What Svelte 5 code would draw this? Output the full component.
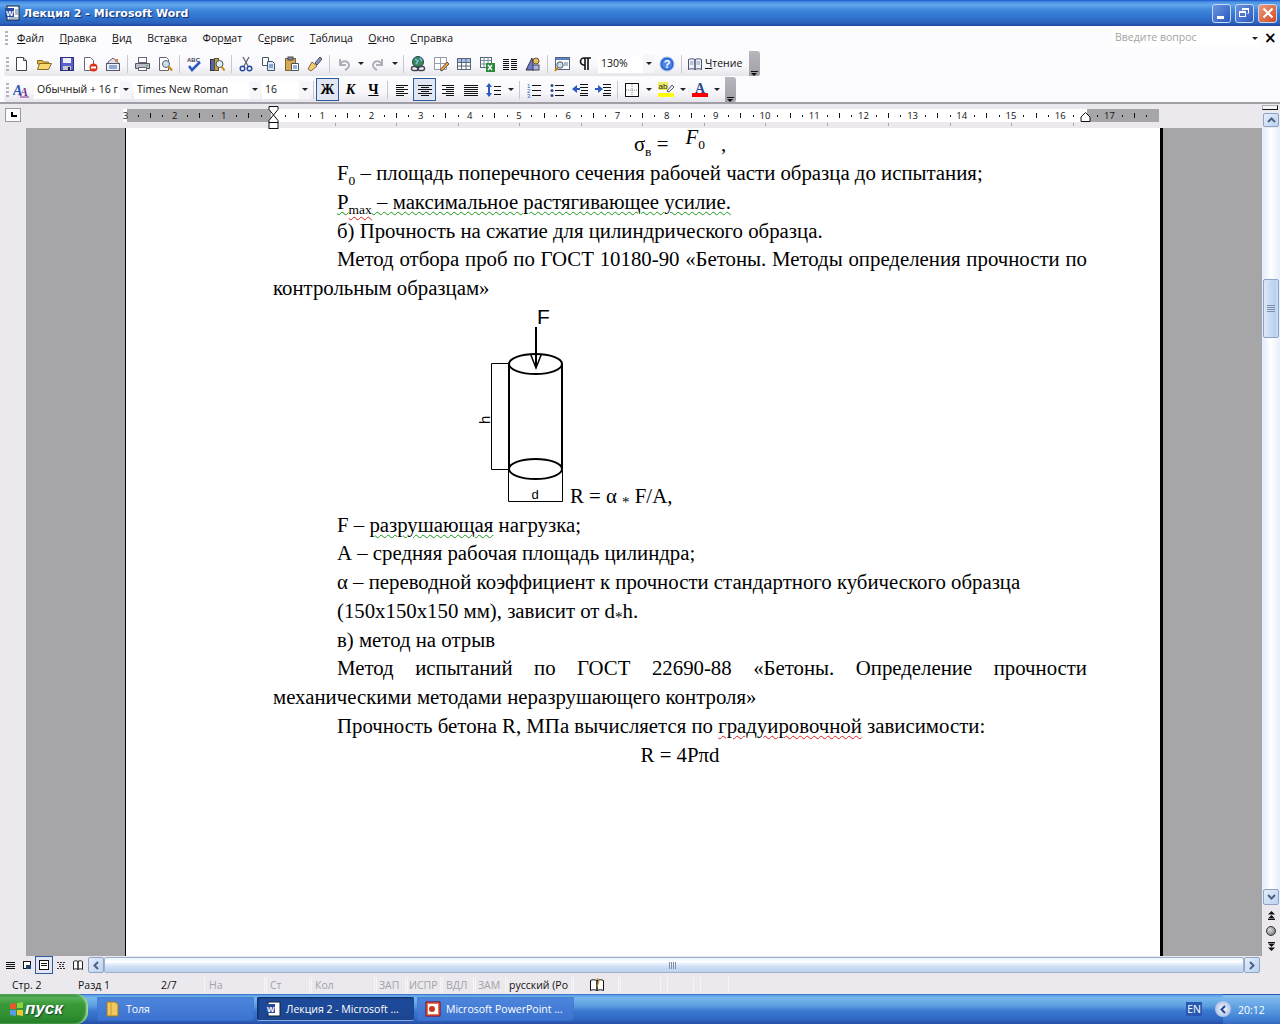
<script>
	const menu = [
		['', 'Ф', 'айл'], ['', 'П', 'равка'], ['', 'В', 'ид'], ['Вст', 'а', 'вка'], ['Фор', 'м', 'ат'],
		['С', 'е', 'рвис'], ['', 'Т', 'аблица'], ['', 'О', 'кно'], ['', 'С', 'правка']
	];

	const lines = (ys) => ys.map(([a, b, y]) => `<path d="M${a} ${y}.5H${b}" stroke="#111"/>`).join('');

	const icons = {
		new: '<path d="M3.5 1.5h7l3 3v10h-10z" fill="#fff" stroke="#444"/><path d="M10.5 1.5v3h3" fill="#dde" stroke="#444"/>',
		open: '<path d="M1.5 4.5h5l1 1.5h5v2h-11z" fill="#e8b84a" stroke="#8a6a1c"/><path d="M1.5 13.5l2-6h12l-3 6z" fill="#f6d873" stroke="#8a6a1c"/>',
		save: '<rect x="1.5" y="1.5" width="13" height="13" fill="#5a62c8" stroke="#2c2f80"/><rect x="4" y="2" width="8" height="5" fill="#eef"/><rect x="4" y="10" width="8" height="4" fill="#c8c8d8"/><rect x="9" y="11" width="2" height="3" fill="#223"/>',
		perm: '<path d="M2.5 1.5h6l3 3v10h-9z" fill="#fff" stroke="#667"/><circle cx="11.5" cy="11.5" r="4" fill="#d8341c"/><rect x="9" y="10.5" width="5" height="2" fill="#fff"/>',
		mail: '<path d="M3 6l5-4 5 4v2H3z" fill="#dde" stroke="#667"/><rect x="1.5" y="7.5" width="13" height="7" fill="#eef" stroke="#556"/><path d="M4 10h8M4 12h8" stroke="#36a"/><rect x="10" y="3" width="3" height="3" fill="#c84"/>',
		print: '<rect x="4.5" y="1.5" width="8" height="5" fill="#fff" stroke="#667"/><path d="M1.5 7.5h14v5h-14z" fill="#b8bcc8" stroke="#556"/><rect x="4.5" y="11.5" width="8" height="3" fill="#fff" stroke="#667"/><rect x="12" y="9" width="2" height="1" fill="#3c3"/>',
		preview: '<path d="M2.5 1.5h7l2 2v11h-9z" fill="#fff" stroke="#667"/><circle cx="9" cy="8" r="3.5" fill="#cde" stroke="#567"/><path d="M11.5 10.5l3.5 4" stroke="#c80" stroke-width="2"/>',
		spell: '<text x="1" y="6" font-size="6" font-family="Liberation Sans" font-weight="bold" fill="#445">ABC</text><path d="M3 10l3 4 8-8" fill="none" stroke="#2a5ac0" stroke-width="2.5"/>',
		research: '<rect x="1.5" y="3.5" width="4" height="11" fill="#5a62a8" stroke="#334"/><rect x="5.5" y="2.5" width="4" height="12" fill="#c8a040" stroke="#553"/><circle cx="10.5" cy="8" r="3.5" fill="#dee" stroke="#456"/><path d="M12.5 10.5l3 4" stroke="#c80" stroke-width="2"/>',
		cut: '<path d="M5 1l5 9M11 1L6 10" stroke="#667" stroke-width="1.3"/><circle cx="4.5" cy="12.5" r="2.3" fill="none" stroke="#2a4aa0" stroke-width="1.4"/><circle cx="11.5" cy="12.5" r="2.3" fill="none" stroke="#2a4aa0" stroke-width="1.4"/>',
		copy: '<path d="M1.5 1.5h6v8h-6z" fill="#fff" stroke="#456"/><path d="M6.5 5.5h5l2 2v7h-7z" fill="#dbe8fa" stroke="#456"/><path d="M8 9h4M8 11h4" stroke="#36a"/>',
		paste: '<rect x="1.5" y="2.5" width="10" height="12" fill="#d8a850" stroke="#764"/><rect x="4" y="1" width="5" height="3" fill="#889" stroke="#445"/><path d="M7.5 7.5h7v7h-7z" fill="#fff" stroke="#456"/><path d="M9 10h4M9 12h4" stroke="#36a"/>',
		brush: '<path d="M1 13l4-7 5 4-6 5z" fill="#f0d070" stroke="#864"/><path d="M8 7l5-6 2 2-5 6z" fill="#889ac0" stroke="#445"/>',
		undo: '<path d="M4 3v6h6M4 9c2-5 8-5 9 0 0 2-2 4-4 5" fill="none" stroke="#aeb0b8" stroke-width="2"/>',
		redo: '<path d="M12 3v6H6M12 9C10 4 4 4 3 9c0 2 2 4 4 5" fill="none" stroke="#aeb0b8" stroke-width="2"/>',
		link: '<circle cx="8" cy="6" r="5.5" fill="#3c8a50" stroke="#246"/><path d="M5 3l3 2-2 3M10 2l2 3" stroke="#7ac0e8" fill="none" stroke-width="1.5"/><rect x="1.5" y="10.5" width="7" height="4" rx="2" fill="none" stroke="#445" stroke-width="1.4"/><rect x="7.5" y="10.5" width="7" height="4" rx="2" fill="none" stroke="#445" stroke-width="1.4"/>',
		borders: '<path d="M1.5 1.5h12v12h-12zM7.5 1.5v12M1.5 7.5h12" fill="#fff" stroke="#99a"/><path d="M7 14l7-8 2 2-7 7z" fill="#e8a040" stroke="#654"/>',
		table: '<rect x="1.5" y="2.5" width="13" height="11" fill="#fff" stroke="#567"/><rect x="2" y="3" width="12" height="3" fill="#a8c0e8"/><path d="M1.5 6.5h13M1.5 10h13M5.5 2.5v11M10 2.5v11" stroke="#567"/>',
		excel: '<rect x="1.5" y="1.5" width="11" height="10" fill="#fff" stroke="#567"/><path d="M1.5 4.5h11M1.5 8h11M5 1.5v10M9 1.5v10" stroke="#789"/><rect x="7" y="7" width="9" height="9" fill="#2a8a3a"/><path d="M9 9l4 5M13 9l-4 5" stroke="#fff" stroke-width="1.3"/>',
		columns: lines([[1, 7, 3], [9, 15, 3], [1, 7, 5], [9, 15, 5], [1, 7, 7], [9, 15, 7], [1, 7, 9], [9, 15, 9], [1, 7, 11], [9, 15, 11], [1, 7, 13], [9, 15, 13]]),
		draw: '<path d="M1 14L7 2l2 12z" fill="#7078c8" stroke="#334"/><circle cx="11" cy="5" r="3" fill="#e8c050" stroke="#654"/><rect x="8" y="9" width="6" height="5" fill="#a8b8e0" stroke="#445"/>',
		docmap: '<rect x="1.5" y="1.5" width="14" height="12" fill="#fff" stroke="#567"/><rect x="2" y="2" width="13" height="2" fill="#5a80c8"/><circle cx="6" cy="9" r="3.2" fill="#cde" stroke="#456"/><path d="M3.5 11.5L1 15" stroke="#c80" stroke-width="2"/><path d="M10 7h4M10 9h4" stroke="#678"/>',
		pilcrow: '<path d="M7 2h7M7 2a3.5 3.5 0 000 7h1V2M8 2v12M11 2v12" fill="none" stroke="#111" stroke-width="1.6"/>',
		help: '<circle cx="8" cy="8" r="7" fill="#2a62d0" stroke="#a8c0e8"/><circle cx="8" cy="8" r="5" fill="#4c86e8"/><text x="8" y="12" font-size="11" font-family="Liberation Sans" font-weight="bold" fill="#fff" text-anchor="middle">?</text>',
		book: '<path d="M1.5 3.5c2-1 4-1 6.5 0v10c-2.500-1-4.500-1-6.500 0zM14.500 3.500c-2-1-4-1-6.500 0v10c2.500-1 4.500-1 6.500 0z" fill="#eef" stroke="#456"/><path d="M3 6h3.500M3 8h3.500M9.500 6H13M9.500 8H13" stroke="#89a"/>',
		styles: '<text x="0" y="13" font-size="14" font-style="italic" font-family="Liberation Serif" font-weight="bold" fill="#2a5ab0">A</text><text x="7" y="14" font-size="12" font-style="italic" font-family="Liberation Serif" font-weight="bold" fill="#803090">A</text><path d="M7 15h9" stroke="#803090"/>',
		left: lines([[2, 14, 3], [2, 10, 5], [2, 14, 7], [2, 10, 9], [2, 14, 11], [2, 10, 13]]),
		center: lines([[1, 15, 3], [4, 12, 5], [1, 15, 7], [4, 12, 9], [1, 15, 11], [4, 12, 13]]),
		right: lines([[2, 14, 3], [6, 14, 5], [2, 14, 7], [6, 14, 9], [2, 14, 11], [6, 14, 13]]),
		justify: lines([[1, 15, 3], [1, 15, 5], [1, 15, 7], [1, 15, 9], [1, 15, 11], [1, 15, 13]]),
		spacing: '<path d="M3 1l3 4H4v6h2l-3 4-3-4h2V5H0z" fill="#2a5ac0"/>' + lines([[8, 15, 4], [8, 15, 8], [8, 15, 12]]),
		numbered: '<text x="1" y="6" font-size="6" font-family="Liberation Sans" fill="#2a5ac0">1</text><text x="1" y="11" font-size="6" font-family="Liberation Sans" fill="#2a5ac0">2</text><text x="1" y="16" font-size="6" font-family="Liberation Sans" fill="#2a5ac0">3</text>' + lines([[6, 15, 3], [6, 15, 8], [6, 15, 13]]),
		bullets: '<circle cx="3" cy="3.500" r="1.500" fill="#2a4a90"/><circle cx="3" cy="8.500" r="1.500" fill="#2a4a90"/><circle cx="3" cy="13.500" r="1.500" fill="#2a4a90"/>' + lines([[6, 15, 3], [6, 15, 8], [6, 15, 13]]),
		outdent: '<path d="M0 7l5-4v3h3v2H5v3z" fill="#2a5ac0"/>' + lines([[8, 16, 2], [8, 16, 5], [9, 16, 8], [8, 16, 11], [8, 16, 13]]),
		indent: '<path d="M8 7L3 3v3H0v2h3v3z" fill="#2a5ac0"/>' + lines([[8, 16, 2], [8, 16, 5], [9, 16, 8], [8, 16, 11], [8, 16, 13]]),
		frame: '<rect x="1.500" y="1.500" width="13" height="13" fill="#fff" stroke="#111"/><path d="M8 2v12M2 8h12" stroke="#888" stroke-dasharray="1 1"/>',
		marker: '<rect x="0" y="0" width="10" height="8" fill="#ecec60"/><text x="0.500" y="7" font-size="8" font-family="Liberation Sans" fill="#223">ab</text><path d="M9 9l5-6 2 2-5 5z" fill="#eef" stroke="#556"/><rect x="0" y="11" width="16" height="4" fill="#ff0"/>',
		color: '<text x="8" y="10.500" font-size="14" font-family="Liberation Serif" font-weight="bold" fill="#2a4a90" text-anchor="middle">A</text><rect x="0" y="11" width="16" height="4" fill="#f00"/>'
	};

	const bar1 = [
		'new', 'open', 'save', 'perm', 'mail', '|', 'print', 'preview', '|', 'spell', 'research', '|',
		'cut', 'copy', 'paste', 'brush', '|', 'undo', '>', 'redo', '>', '|',
		'link', 'borders', 'table', 'excel', 'columns', 'draw', '|', 'docmap', 'pilcrow'
	];
	const bar2a = ['left', 'center', 'right', 'justify', 'spacing', '>', '|', 'numbered', 'bullets', 'outdent', 'indent', '|', 'frame', '>', 'marker', '>', 'color', '>'];

	// ruler: 49.2px per cm, zero at the left margin
	const cm = 49.2;
	const zero = 273;
	const rulerMarks = [];
	for (let i = -3; i <= 17; i++) {
		const x = zero + i * cm;
		if (i !== 0) rulerMarks.push({ x, label: String(Math.abs(i)) });
		rulerMarks.push({ x: x + cm * 0.25, dot: true });
		rulerMarks.push({ x: x + cm * 0.5, bar: true });
		rulerMarks.push({ x: x + cm * 0.75, dot: true });
	}
	const marks = rulerMarks.filter((m) => m.x < 1155 && Math.abs(m.x - zero) > 1 && Math.abs(m.x - 1087) > 4);
	const tabs = Array.from({ length: 13 }, (_, i) => zero + 61.5 * (i + 1));

	const cells = [
		['Стр. 2', 66, 11, false], ['Разд 1', 83, 11, false], ['2/7', 55, 11, false],
		['На', 61, 4, true], ['Ст', 44, 3, true], ['Кол', 64, 3, true], ['ЗАП', 30, 2, true],
		['ИСПР', 34, 1, true], ['ВДЛ', 32, 3, true], ['ЗАМ', 31, 2, true], ['русский (Ро', 65, 1, false]
	];
</script>

{#snippet icon(name)}
	<svg class="ico" viewBox="0 0 16 16" width="16" height="16">{@html icons[name]}</svg>
{/snippet}

{#snippet tools(list)}
	{#each list as t}
		{#if t === '|'}
			<span class="sep"></span>
		{:else if t === '>'}
			<span class="drop"></span>
		{:else}
			<span class="btn">{@render icon(t)}</span>
		{/if}
	{/each}
{/snippet}

<div class="window">
	<header class="title">
		<svg class="appicon" viewBox="0 0 16 16" width="16" height="16">
			<rect x="2" y="1" width="12" height="14" fill="#fff" stroke="#123"/>
			<rect x="0" y="3" width="9" height="9" fill="#2a4aa0"/>
			<text x="1" y="10.500" font-size="8" font-family="Liberation Sans" font-weight="bold" fill="#fff">W</text>
			<path d="M10 5h3M10 7h3M10 9h3M4 13h9" stroke="#57a"/>
		</svg>
		<span class="title-text">Лекция 2 - Microsoft Word</span>
		<div class="winbtns">
			<span class="winbtn"><i class="min"></i></span>
			<span class="winbtn"><i class="max"></i><i class="max back"></i></span>
			<span class="winbtn close">
				<svg viewBox="0 0 12 12" width="12" height="12"><path d="M1.500 1.500l9 9M10.500 1.500l-9 9" stroke="#fff" stroke-width="2.200"/></svg>
			</span>
		</div>
	</header>

	<nav class="menubar">
		<span class="hgrip"></span>
		{#each menu as [a, u, b]}
			<span class="menuitem">{a}<u>{u}</u>{b}</span>
		{/each}
		<div class="ask">
			<span class="ask-box">Введите вопрос</span>
			<span class="arrow"></span>
			<span class="ask-x">×</span>
		</div>
	</nav>

	<div class="rebar">
		<div class="toolbar one">
			<span class="hgrip"></span>
			{@render tools(bar1)}
			<span class="combo zoom"><span class="val">130%</span><span class="arrow"></span></span>
			<span class="btn">{@render icon('help')}</span>
			<span class="sep"></span>
			<span class="read">{@render icon('book')}<span class="read-text"><u>Ч</u>тение</span></span>
			<span class="endgrip"></span>
		</div>
	</div>
	<div class="rebar">
		<div class="toolbar two">
			<span class="hgrip"></span>
			<span class="btn">{@render icon('styles')}</span>
			<span class="combo style"><span class="val">Обычный + 16 г</span><span class="arrow"></span></span>
			<span class="combo font"><span class="val">Times New Roman</span><span class="arrow"></span></span>
			<span class="combo size"><span class="val">16</span><span class="arrow"></span></span>
			<span class="sep"></span>
			<span class="btn on bold">Ж</span>
			<span class="btn ital">К</span>
			<span class="btn under">Ч</span>
			<span class="sep narrow"></span>
			{#each bar2a as t}
				{#if t === '|'}
					<span class="sep"></span>
				{:else if t === '>'}
					<span class="drop"></span>
				{:else}
					<span class="btn" class:on={t === 'center'}>{@render icon(t)}</span>
				{/if}
			{/each}
			<span class="endgrip"></span>
		</div>
	</div>

	<div class="rulerrow">
		<span class="tabsel"></span>
		<div class="ruler">
			<span class="shade sl"></span>
			<span class="shade sr"></span>
			{#each marks as m}
				{#if m.label}
					<span class="num" style="left:{m.x}px">{m.label}</span>
				{:else if m.dot}
					<span class="dot" style="left:{Math.round(m.x)}px"></span>
				{:else}
					<span class="tick" style="left:{Math.round(m.x)}px"></span>
				{/if}
			{/each}
			{#each tabs as t}
				<span class="tabstop" style="left:{Math.round(t)}px"></span>
			{/each}
			<svg class="indent il" viewBox="0 0 11 23" width="11" height="23">
				<path d="M1 .5h9v3L5.500 9 1 3.500zM5.500 9L10 14.500v2H1v-2z" fill="#fff" stroke="#111"/>
				<rect x="1" y="16.500" width="9" height="6" fill="#fff" stroke="#111"/>
			</svg>
			<svg class="indent ir" viewBox="0 0 11 10" width="11" height="10">
				<path d="M5.500 .5L10 5v4.500H1V5z" fill="#fff" stroke="#111"/>
			</svg>
		</div>
		<span class="splitter"></span>
	</div>

	<div class="workarea">
		<div class="vruler"></div>
		<main class="canvas">
			<article class="page">
				<p class="formula">σ<sub>в</sub> =<span class="frac"><i>F</i><sub>0</sub></span><span class="comma">,</span></p>
				<p class="ind">F<sub>0</sub> – площадь поперечного сечения рабочей части образца до испытания;</p>
				<p class="ind"><span class="sq">P<sub class="sqred">max</sub> – максимальное растягивающее усилие.</span></p>
				<p class="ind">б) Прочность на сжатие для цилиндрического образца.</p>
				<p class="ind just">Метод отбора проб по ГОСТ 10180-90 «Бетоны. Методы определения прочности по контрольным образцам»</p>
				<p class="fig">
					<svg class="diagram" viewBox="0 1 85 200" width="85" height="200">
						<g fill="none" stroke="#000">
							<ellipse cx="50.500" cy="62" rx="26.500" ry="10" stroke-width="2"/>
							<ellipse cx="50.500" cy="167" rx="26.500" ry="10" stroke-width="2"/>
							<path d="M24 62v105M77 62v105" stroke-width="2"/>
							<path d="M23 61.500H6.500v106H23M23.500 168v31.500h54V168"/>
							<path d="M51 25v40" stroke-width="2"/>
							<path d="M45.500 52l5.500 14 5.500-14" stroke-width="1.500"/>
						</g>
						<text x="52" y="22" class="fF">F</text>
						<text x="50" y="197" class="fd" text-anchor="middle">d</text>
						<text class="fd fh" transform="translate(5 122) rotate(-90)">h</text>
					</svg>R = α <span class="star">*</span> F/A,</p>
				<p class="ind">F – <span class="sq">разрушающая</span> нагрузка;</p>
				<p class="ind">А – средняя рабочая площадь цилиндра;</p>
				<p class="ind">α – переводной коэффициент к прочности стандартного кубического образца</p>
				<p class="ind">(150х150х150 мм), зависит от d<span class="star">*</span>h.</p>
				<p class="ind">в) метод на отрыв</p>
				<p class="ind just">Метод испытаний по ГОСТ 22690-88 «Бетоны. Определение прочности механическими методами неразрушающего контроля»</p>
				<p class="ind">Прочность бетона R, МПа вычисляется по <span class="sqr">градуировочной</span> зависимости:</p>
				<p class="center">R = 4Pπd</p>
			</article>
		</main>
		<aside class="vscroll">
			<span class="sbtn up"><svg viewBox="0 0 9 6" width="9" height="6"><path d="M1 5l3.500-3.500L8 5" fill="none" stroke="#4d6185" stroke-width="2"/></svg></span>
			<div class="vtrack">
				<span class="vthumb"><i></i></span>
			</div>
			<span class="sbtn down"><svg viewBox="0 0 9 6" width="9" height="6"><path d="M1 1l3.500 3.500L8 1" fill="none" stroke="#4d6185" stroke-width="2"/></svg></span>
			<div class="browse">
				<svg viewBox="0 0 9 9" width="9" height="9"><path d="M4.500 0L8 3.500H1zM4.500 4L8 7.500H1z M1 8h7v1H1z" fill="#111"/></svg>
				<span class="ball"></span>
				<svg viewBox="0 0 9 9" width="9" height="9"><path d="M1 0h7v1H1zM4.500 5L1 1.500h7zM4.500 9L1 5.500h7z" fill="#111"/></svg>
			</div>
		</aside>
	</div>

	<div class="hscrollrow">
		<div class="views">
			<svg viewBox="0 0 16 16" width="16" height="16"><path d="M4 5.500h9M4 7.500h9M4 9.500h9M4 11.500h9" stroke="#111"/></svg>
			<svg viewBox="0 0 16 16" width="16" height="16"><rect x="4.500" y="4.500" width="7" height="7" fill="#fff" stroke="#111"/><rect x="7" y="8" width="5" height="4" fill="#246"/></svg>
			<span class="view-on"><svg viewBox="0 0 16 16" width="16" height="16"><rect x="3.500" y="3.500" width="9" height="9" fill="#fff" stroke="#111"/><path d="M5 6.500h6M5 8.500h6" stroke="#111"/></svg></span>
			<svg viewBox="0 0 16 16" width="16" height="16"><path d="M4 5.500h8M6 7.500h6M6 9.500h6M4 11.500h8" stroke="#333" stroke-dasharray="2 1"/></svg>
			<svg viewBox="0 0 16 16" width="16" height="16"><path d="M3.500 4.500c1.500-1 3-1 4.500 0v8c-1.500-1-3-1-4.500 0zM12.500 4.500c-1.500-1-3-1-4.500 0v8c1.500-1 3-1 4.500 0z" fill="#fff" stroke="#222"/></svg>
		</div>
		<span class="sbtn"><svg viewBox="0 0 6 9" width="6" height="9"><path d="M5 1L1.500 4.500 5 8" fill="none" stroke="#4d6185" stroke-width="2"/></svg></span>
		<div class="htrack"><i></i></div>
		<span class="sbtn"><svg viewBox="0 0 6 9" width="6" height="9"><path d="M1 1l3.500 3.500L1 8" fill="none" stroke="#4d6185" stroke-width="2"/></svg></span>
	</div>

	<footer class="status">
		{#each cells as [text, w, pad, dim], i}
			<span class="cell" class:dim class:first={i < 3} style="width:{w}px;padding-left:{pad}px">{text}</span>
		{/each}
		<span class="cell bookcell" style="width:46px">
			<svg viewBox="0 0 16 16" width="16" height="16"><path d="M1.500 3.500c2-1 4-1 6.500 0v10c-2.500-1-4.500-1-6.500 0zM14.500 3.500c-2-1-4-1-6.500 0v10c2.500-1 4.500-1 6.500 0z" fill="#fff" stroke="#111"/><path d="M8 1l2 3-2 6" stroke="#c80" fill="none"/></svg>
		</span>
		<span class="cell" style="width:41px"></span>
		<span class="cell gapl" style="width:27px"></span>
		<span class="cell gapl" style="width:29px"></span>
	</footer>

	<div class="taskbar">
		<button class="start">
			<svg viewBox="0 0 16 16" width="16" height="16"><path d="M1 3l6-1v6H1z" fill="#e8582a"/><path d="M8 2l6-1v6H8z" fill="#8ad040"/><path d="M1 9h6v6l-6-1z" fill="#5a9ae8"/><path d="M8 9h6v6l-6-1z" fill="#f0c830"/></svg>
			<span>пуск</span>
		</button>
		<div class="tasks">
			<span class="task">
				<svg viewBox="0 0 16 16" width="16" height="16"><path d="M2 1h8l3 2v12H2z" fill="#f0c860" stroke="#a07820"/><path d="M6 1v14" stroke="#c89830"/></svg>
				Толя
			</span>
			<span class="task active">
				<svg viewBox="0 0 16 16" width="16" height="16"><rect x="3" y="1" width="12" height="14" fill="#fff" stroke="#123"/><rect x="1" y="3" width="9" height="9" fill="#2a4aa0"/><text x="2" y="10.500" font-size="8" font-family="Liberation Sans" font-weight="bold" fill="#fff">W</text></svg>
				Лекция 2 - Microsoft ...
			</span>
			<span class="task">
				<svg viewBox="0 0 16 16" width="16" height="16"><rect x="1" y="1" width="14" height="14" fill="#e87848" stroke="#802"/><rect x="3" y="3" width="10" height="10" fill="#fff"/><circle cx="7" cy="8" r="3" fill="#c83818"/></svg>
				Microsoft PowerPoint ...
			</span>
		</div>
		<span class="lang">EN</span>
		<div class="tray">
			<span class="trayarrow"><svg viewBox="0 0 6 9" width="6" height="9"><path d="M5 1L1.500 4.500 5 8" fill="none" stroke="#234a90" stroke-width="2"/></svg></span>
			<span class="clock">20:12</span>
		</div>
	</div>
</div>

<style>
	:global(body) {
		margin: 0;
		background: #ebe9ed;
		overflow: hidden;
	}

	.window {
		width: 1280px;
		height: 1024px;
		display: flex;
		flex-direction: column;
		overflow: hidden;
		font-family: "Open Sans", "Noto Sans", sans-serif;
		font-size: 10.5px;
		color: #111;
		background: #fcfbfe;
	}

	/* title bar */
	.title {
		height: 26px;
		flex: none;
		display: flex;
		align-items: center;
		padding-left: 5px;
		box-sizing: border-box;
		background: linear-gradient(#1a56c8 0, #4a92e4 2px, #62a6ec 5px, #3f86dc 10px, #2f74d0 17px, #2c62bc 23px, #1e48a0 26px);
	}

	.appicon {
		margin-right: 2px;
	}

	.title-text {
		font-family: "DejaVu Sans", sans-serif;
		font-weight: bold;
		font-size: 11px;
		color: #fff;
		text-shadow: 1px 1px 1px #0f2a70;
	}

	.winbtns {
		margin-left: auto;
		display: flex;
		gap: 4px;
		padding-right: 3px;
	}

	.winbtn {
		width: 19px;
		height: 19px;
		box-sizing: border-box;
		border: 1px solid #c8d8f0;
		border-radius: 3px;
		background: linear-gradient(135deg, #6a94e0, #2c58c0);
		position: relative;
		display: flex;
		align-items: center;
		justify-content: center;
	}

	.winbtn.close {
		background: linear-gradient(135deg, #ec9a80, #d04a20);
	}

	.min {
		position: absolute;
		left: 4px;
		bottom: 3px;
		width: 7px;
		height: 3px;
		background: #fff;
	}

	.max {
		position: absolute;
		left: 3px;
		top: 6px;
		width: 7px;
		height: 6px;
		box-sizing: border-box;
		border: 1px solid #fff;
		border-top-width: 2px;
	}

	.max.back {
		left: 6px;
		top: 3px;
		clip-path: polygon(0 0, 100% 0, 100% 100%, 70% 100%, 70% 50%, 0 50%);
	}

	/* menu */
	.menubar {
		height: 24px;
		flex: none;
		display: flex;
		align-items: center;
		padding-left: 5px;
		box-sizing: border-box;
	}

	.hgrip {
		width: 3px;
		height: 14px;
		flex: none;
		background: repeating-linear-gradient(#b4b3bb 0 2px, transparent 2px 4px);
	}

	.menubar .hgrip {
		margin-right: 9px;
	}

	.menuitem {
		margin-right: 15.500px;
		white-space: nowrap;
	}

	.ask {
		position: absolute;
		left: 1113px;
		top: 29px;
		display: flex;
		align-items: center;
	}

	.ask-box {
		width: 136px;
		height: 18px;
		line-height: 17px;
		padding-left: 2px;
		background: #fff;
		color: #a3a3a3;
		box-sizing: border-box;
	}

	.ask-box + .arrow {
		width: 11px;
		height: 18px;
		background-color: #fff;
	}

	.ask-x {
		margin-left: 4px;
		font: bold 15px "DejaVu Sans", sans-serif;
		color: #000;
	}

	/* toolbars */
	.rebar {
		height: 26px;
		flex: none;
		padding: 1px 0 0 4px;
		box-sizing: border-box;
	}

	.toolbar {
		height: 25px;
		display: inline-flex;
		align-items: center;
		padding-left: 2px;
		box-sizing: border-box;
		border-radius: 3px 0 0 3px;
		background: linear-gradient(#fdfdff, #f8f7fb 60%, #e6e5eb);
	}

	.btn {
		width: 23px;
		height: 23px;
		flex: none;
		box-sizing: border-box;
		display: flex;
		align-items: center;
		justify-content: center;
	}

	.btn.on {
		background: #e1e6f2;
		border: 1px solid #2f5a9c;
	}

	.bold,
	.ital,
	.under {
		font-family: "Liberation Serif", serif;
		font-weight: bold;
		font-size: 14px;
		color: #000;
	}

	.ital {
		font-style: italic;
	}

	.under {
		text-decoration: underline;
	}

	.sep {
		width: 1px;
		height: 18px;
		margin: 0 2.500px;
		flex: none;
		background: #c8c7cf;
	}

	.sep.narrow {
		margin: 0 2px;
	}

	.drop,
	.arrow {
		flex: none;
		position: relative;
	}

	.drop {
		width: 11px;
		height: 23px;
	}

	.drop::after,
	.arrow::after {
		content: "";
		position: absolute;
		left: 50%;
		top: 50%;
		margin: -1.500px 0 0 -3px;
		border: 3px solid transparent;
		border-top: 3px solid #222;
		border-bottom: 0;
	}

	.combo {
		display: flex;
		height: 18px;
		flex: none;
		background: #fff;
		align-items: center;
		box-sizing: border-box;
		padding-left: 3px;
	}

	.combo .val {
		flex: 1;
		white-space: nowrap;
		overflow: hidden;
		padding-bottom: 2px;
	}

	.combo .arrow {
		width: 11px;
		height: 18px;
		background-color: #f6f5f9;
	}

	.zoom {
		width: 56px;
		margin: 0 1px 0 2px;
	}

	.style {
		width: 97px;
		margin-left: 2px;
	}

	.font {
		width: 126px;
		margin-left: 3px;
	}

	.size {
		width: 48px;
		margin-left: 2px;
	}

	.read {
		display: flex;
		align-items: center;
		gap: 2px;
		padding-left: 3px;
		width: 64px;
		flex: none;
		box-sizing: border-box;
	}

	.read-text {
		padding-bottom: 1px;
	}

	.endgrip {
		width: 11px;
		height: 25px;
		flex: none;
		margin-left: 1px;
		border-radius: 0 3px 3px 0;
		background: linear-gradient(#b7b6bc, #a09fa5);
		position: relative;
	}

	.toolbar.two .endgrip {
		margin-left: 3px;
	}

	.endgrip::after {
		content: "";
		position: absolute;
		left: 2px;
		bottom: 4px;
		width: 7px;
		height: 1px;
		background: #111;
	}

	.endgrip::before {
		content: "";
		position: absolute;
		left: 2px;
		bottom: 0;
		border: 3.500px solid transparent;
		border-top-color: #111;
		border-bottom: 0;
	}

	/* ruler */
	.rulerrow {
		height: 26px;
		flex: none;
		position: relative;
		border-top: 2px solid #a09fa5;
		box-sizing: border-box;
		background: #ebe9ed;
	}

	.tabsel {
		position: absolute;
		left: 5px;
		top: 4px;
		width: 16px;
		height: 14px;
		box-sizing: border-box;
		border: 1px solid #9a99a0;
		background: #fcfbfe;
	}

	.tabsel::after {
		content: "";
		position: absolute;
		left: 5px;
		top: 3px;
		width: 6px;
		height: 5px;
		box-sizing: border-box;
		border-left: 2px solid #000;
		border-bottom: 2px solid #000;
	}

	.ruler {
		position: absolute;
		left: 0;
		top: 5px;
		width: 1280px;
		height: 13px;
	}

	.ruler::before {
		content: "";
		position: absolute;
		left: 123px;
		width: 1036px;
		top: 0;
		height: 13px;
		background: #fff;
	}

	.shade {
		position: absolute;
		top: 0;
		height: 13px;
		background: #a6a5a8;
	}

	.sl {
		left: 127px;
		width: 144px;
	}

	.sr {
		left: 1087px;
		width: 72px;
	}

	.num {
		position: absolute;
		top: 0;
		line-height: 13px;
		font-size: 9.500px;
		transform: translateX(-50%);
	}

	.dot {
		position: absolute;
		top: 6px;
		width: 1px;
		height: 2px;
		background: #111;
	}

	.tick {
		position: absolute;
		top: 4px;
		width: 1px;
		height: 5px;
		background: #111;
	}

	.tabstop {
		position: absolute;
		top: 14px;
		width: 1px;
		height: 3px;
		background: #a6a5a8;
	}

	.indent {
		position: absolute;
	}

	.il {
		left: 268px;
		top: -3px;
	}

	.ir {
		left: 1080px;
		top: 3px;
	}

	.splitter {
		position: absolute;
		left: 1262px;
		top: 1px;
		width: 16px;
		height: 5px;
		box-sizing: border-box;
		background: #f4f4f8;
		border: 1px solid #b0b0b8;
		border-bottom: 1px solid #111;
		border-right: 1px solid #111;
	}

	/* document */
	.workarea {
		flex: 1;
		min-height: 0;
		display: flex;
	}

	.vruler {
		width: 26px;
		flex: none;
		background: #ebe9ed;
	}

	.canvas {
		flex: 1;
		min-width: 0;
		overflow: hidden;
		background: #a6a5a8;
		padding-left: 99px;
	}

	.page {
		width: 1038px;
		height: 100%;
		box-sizing: border-box;
		background: #fff;
		border-left: 1px solid #000;
		border-right: 3px solid #000;
		padding: 2px 73px 0 147px;
		font-family: "Liberation Serif", "Times New Roman", serif;
		font-size: 20.800px;
		line-height: 28.750px;
		color: #000;
		overflow: hidden;
	}

	.page p {
		margin: 0;
	}

	.page sub {
		font-size: 13.500px;
		line-height: 0;
	}

	.ind {
		text-indent: 64px;
	}

	.just {
		text-align: justify;
	}

	.center {
		text-align: center;
	}

	.formula {
		text-align: center;
		white-space: nowrap;
		height: 29px;
	}

	.frac {
		display: inline-block;
		line-height: 0;
		margin-left: 17px;
		vertical-align: 7px;
	}

	.comma {
		margin-left: 16px;
	}

	.fig {
		padding-left: 212px;
	}

	.star {
		font-size: 15px;
		vertical-align: -4px;
		line-height: 0;
	}

	.diagram {
		overflow: visible;
	}

	.fF {
		font: 21px "Liberation Sans", sans-serif;
	}

	.fd {
		font: 13px "Liberation Sans", sans-serif;
	}

	.fh {
		font-size: 15px;
	}

	.sq {
		text-decoration: underline wavy #1a9a1a 1px;
		text-underline-offset: 2px;
	}

	.sqred {
		text-decoration: underline wavy #e02020 1px;
	}

	.sqr {
		text-decoration: underline wavy #e02020 1px;
		text-underline-offset: 2px;
	}

	/* scrollbars */
	.vscroll {
		width: 18px;
		flex: none;
		display: flex;
		flex-direction: column;
		align-items: center;
		background: linear-gradient(90deg, #e2ecfb, #fff 50%, #e6effc);
		position: relative;
	}

	.sbtn {
		width: 16px;
		height: 16px;
		flex: none;
		box-sizing: border-box;
		display: flex;
		align-items: center;
		justify-content: center;
		border: 1px solid #8ea3c4;
		border-radius: 2px;
		background: linear-gradient(135deg, #e4eefc, #bcd2ee);
	}

	.sbtn.up {
		position: absolute;
		top: -15px;
		height: 14px;
	}

	.vtrack {
		flex: 1;
		width: 100%;
		position: relative;
		padding-top: 151px;
		box-sizing: border-box;
	}

	.vthumb {
		display: block;
		width: 16px;
		height: 59px;
		margin-left: 1px;
		box-sizing: border-box;
		border: 1px solid #8ea3c4;
		border-radius: 2px;
		background: linear-gradient(90deg, #dce8fa, #b8cff0 80%, #cfdff6);
		position: relative;
	}

	.vthumb i {
		position: absolute;
		left: 3px;
		top: 25px;
		width: 8px;
		height: 7px;
		background: repeating-linear-gradient(#8090a8 0 1px, transparent 1px 2px);
	}

	.browse {
		height: 51px;
		width: 100%;
		flex: none;
		background: #ebe9ed;
		display: flex;
		flex-direction: column;
		align-items: center;
		gap: 7px;
		padding-top: 6px;
		box-sizing: border-box;
	}

	.ball {
		width: 8px;
		height: 8px;
		flex: none;
		border-radius: 50%;
		background: radial-gradient(circle at 35% 35%, #ddd, #666);
		border: 1px solid #333;
		box-sizing: content-box;
		margin: -1px 0;
	}

	.hscrollrow {
		height: 18px;
		flex: none;
		display: flex;
		align-items: center;
		background: #ebe9ed;
		padding-right: 20px;
		box-sizing: border-box;
	}

	.views {
		width: 88px;
		flex: none;
		display: flex;
		align-items: center;
		padding-left: 2px;
		box-sizing: border-box;
		gap: 1px;
	}

	.view-on {
		display: flex;
		outline: 1px solid #2f5a9c;
		background: #e1e6f2;
	}

	.htrack {
		flex: 1;
		height: 16px;
		box-sizing: border-box;
		border: 1px solid #9db0cc;
		border-radius: 2px;
		background: linear-gradient(#e8f1fd, #fff 25%, #d0e0f6 60%, #bcd2ee);
		position: relative;
	}

	.htrack i {
		position: absolute;
		left: 564px;
		top: 4px;
		width: 8px;
		height: 7px;
		background: repeating-linear-gradient(90deg, #8090a8 0 1px, transparent 1px 2px);
	}

	/* status bar */
	.status {
		height: 20px;
		flex: none;
		display: flex;
		align-items: flex-end;
		padding-bottom: 1px;
		box-sizing: border-box;
		background: #ebe9ed;
		font-size: 10.500px;
	}

	.cell {
		height: 16px;
		line-height: 16px;
		box-sizing: border-box;
		white-space: nowrap;
		overflow: hidden;
		flex: none;
		border-left: 1px solid #f6f5f8;
		border-right: 1px solid #f6f5f8;
		margin-right: 1px;
	}

	.cell.first {
		border-color: transparent;
		margin-right: 0;
	}

	.cell.dim {
		color: #a3a2a8;
	}

	.cell.gapl {
		margin-left: 5px;
	}

	.bookcell {
		padding-left: 15px;
	}

	/* taskbar */
	.taskbar {
		height: 30px;
		flex: none;
		display: flex;
		align-items: center;
		background: linear-gradient(#2a52b0 0, #5a9ee6 1px, #76b8ec 4px, #5a9ee0 12px, #3a78d0 17px, #2f68c4 25px, #264ea4 30px);
		font-size: 10.500px;
		color: #fff;
		position: relative;
	}

	.start {
		width: 88px;
		height: 30px;
		padding: 0 0 0 9px;
		border: 0;
		border-radius: 0 12px 12px 0;
		display: flex;
		align-items: center;
		gap: 0;
		background: linear-gradient(#2f8a38 0, #58b058 4px, #3a9a3a 10px, #309030 22px, #1f7a24 30px);
		box-shadow: inset -2px 0 2px #a8d8a0;
		font: italic bold 17px "Liberation Sans", sans-serif;
		color: #fff;
		text-shadow: 1px 1px 1px #143;
	}

	.tasks {
		display: flex;
		gap: 3px;
		margin-left: 9px;
	}

	.task {
		width: 157px;
		height: 24px;
		box-sizing: border-box;
		display: flex;
		align-items: center;
		gap: 5px;
		padding-left: 8px;
		border-radius: 2px;
		background: linear-gradient(#4f86dc, #3a72d0);
		white-space: nowrap;
		box-shadow: inset 0 0 1px #1e4aa0;
	}

	.task.active {
		background: linear-gradient(#1e4a9c, #1c4690);
		box-shadow: inset 1px 1px 2px #0e2a60;
		border-bottom: 1px solid #8aa8dc;
	}

	.lang {
		position: absolute;
		left: 1186px;
		top: 8px;
		width: 16px;
		height: 14px;
		line-height: 14px;
		text-align: center;
		background: #2a58b0;
	}

	.tray {
		position: absolute;
		right: 0;
		top: 0;
		width: 57px;
		height: 30px;
		display: flex;
		align-items: center;
		background: linear-gradient(#8ac4f0, #7ab4ec 4px, #5a9ce0 14px, #3f80d4 24px, #3468c0);
		border-top: 1px solid #2a52b0;
		box-sizing: border-box;
	}

	.trayarrow {
		position: absolute;
		left: -8px;
		top: 6px;
		width: 16px;
		height: 16px;
		border-radius: 50%;
		background: radial-gradient(#fff, #8aa8dc);
		display: flex;
		align-items: center;
		justify-content: center;
	}

	.clock {
		margin-left: 15px;
	}
</style>
